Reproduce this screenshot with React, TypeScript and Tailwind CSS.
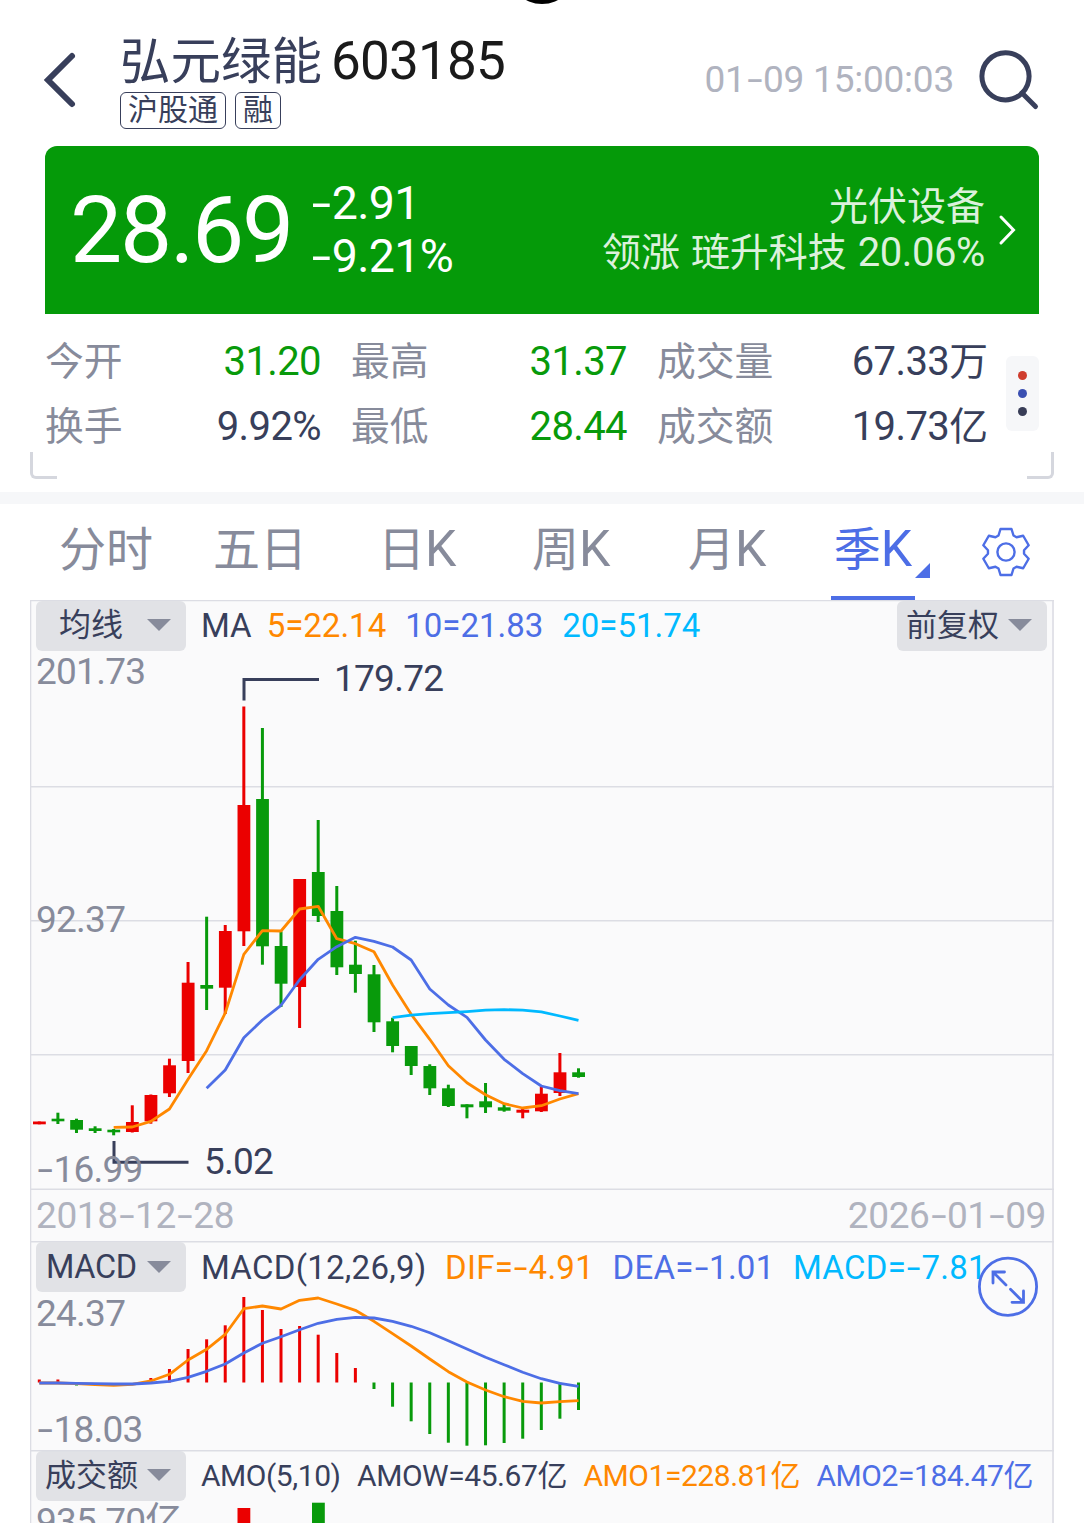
import {Fragment} from "react"
import type {ReactNode} from "react"

interface Candle {
	up: boolean
	top: number
	bottom: number
	high: number
	low: number
}

const UP = "#eb0000"
const DOWN = "#089a0b"
const GRID = "#dcdde4"

const STEP = 18.593
const xAt = (i: number) => 39.3 + STEP * i

// [up, body top, body bottom, wick top, wick bottom]
const rows: [number, number, number, number, number][] = [
	[1, 1121.5, 1124.3, 1121.5, 1124.3],
	[0, 1118.7, 1121.3, 1112.7, 1124],
	[0, 1120, 1129.7, 1118.7, 1133],
	[0, 1128.3, 1131, 1126.3, 1133],
	[0, 1129.7, 1132.3, 1129, 1135.3],
	[1, 1122, 1132, 1105.3, 1132.5],
	[1, 1095, 1121.3, 1094.5, 1123.7],
	[1, 1065.3, 1093.3, 1058.7, 1097],
	[1, 982.7, 1061, 962, 1073],
	[0, 985, 988.7, 916.7, 1010],
	[1, 931, 987.7, 925, 1014],
	[1, 805, 931.3, 706.5, 946],
	[0, 799, 946.3, 728, 964.7],
	[0, 946, 983.7, 931.5, 1007],
	[1, 879, 987, 879, 1028],
	[0, 872, 916, 820, 922],
	[0, 911, 967.3, 886, 975],
	[0, 964.7, 974, 940.7, 992.7],
	[0, 974.3, 1022.3, 965, 1032],
	[0, 1021.3, 1046, 1017.7, 1052.3],
	[0, 1046, 1066, 1046, 1075],
	[0, 1066, 1088.3, 1064.3, 1095],
	[0, 1088.3, 1106, 1084.7, 1107],
	[0, 1104.3, 1107.3, 1104.3, 1118.3],
	[0, 1101.3, 1107.3, 1083, 1113],
	[0, 1107.3, 1110.7, 1104, 1111.7],
	[1, 1109.7, 1112.7, 1109, 1118.3],
	[1, 1093.7, 1111.3, 1086.7, 1112],
	[1, 1072.3, 1093, 1053, 1096],
	[0, 1072.3, 1077, 1068.3, 1077.7],
]
const candles: Candle[] = rows.map(([up, top, bottom, high, low]) => ({up: up === 1, top, bottom, high, low}))

const ma5 = [
	1127.3, 1127, 1121.3, 1109, 1079.3, 1050.7, 1013, 954.3, 930.7, 931, 909, 906.3, 938.7, 943.7, 951.7, 985, 1014.3,
	1039.3, 1065.7, 1082.7, 1094.7, 1103.7, 1108, 1105.7, 1099, 1093.7,
]
const ma10 = [
	1088.3, 1070, 1037.7, 1020, 1005.3, 979.7, 959.3, 946.7, 937.3, 941.3, 947, 960, 989, 1005, 1017.3, 1040, 1059.3,
	1073.7, 1086, 1090.7, 1093.7,
]
const ma20 = [1017.7, 1015.2, 1013.7, 1012.7, 1011.6, 1010.2, 1009.6, 1010.2, 1011.8, 1016, 1020.3]

const ZERO = 1382.5
const macd = [
	1379.5, 1379.5, 1385.5, 1382.5, 1382.5, 1382.5, 1378, 1369, 1349, 1339.3, 1325.3, 1297, 1310, 1329, 1326, 1334.7,
	1353, 1368, 1389, 1406.7, 1421.3, 1434, 1442.7, 1445.7, 1445.3, 1443, 1438.7, 1430, 1418.7, 1410,
]
const dif = [
	1383, 1383, 1383.7, 1384.5, 1385.3, 1384.3, 1381, 1374.3, 1360, 1349.3, 1334.3, 1308.7, 1306, 1309, 1300.3, 1298,
	1304, 1310.3, 1321.3, 1333.7, 1346, 1359, 1371.7, 1382, 1390, 1396.7, 1401.3, 1403, 1401.7, 1400.7,
]
const dea = [
	1383, 1383, 1383.3, 1383.6, 1384, 1384, 1383, 1381.3, 1377.3, 1371.3, 1364, 1353, 1343.3, 1336.7, 1329.7, 1323.3,
	1319.3, 1317.3, 1318, 1321.3, 1326.3, 1332.7, 1340.7, 1349, 1357.3, 1364.7, 1372.3, 1378.7, 1383.3, 1386.3,
]

// Hyphens are stretched so that they take about the width of a digit
function Num({children}: {children: string}) {
	const parts = children.split("-")
	return (
		<>
			{parts.map((part, i) => (
				<Fragment key={i}>
					{i > 0 && <span className="inline-block w-[0.47em] scale-x-150 text-center">-</span>}
					{part}
				</Fragment>
			))}
		</>
	)
}

function Line({data, start, color}: {data: number[]; start: number; color: string}) {
	const points = data.map((y, i) => `${xAt(start + i)},${y}`).join(" ")
	return <polyline points={points} fill="none" stroke={color} strokeWidth={2.8} strokeLinejoin="round" />
}

function GridLine({y}: {y: number}) {
	return <line x1={30} x2={1054} y1={y} y2={y} stroke={GRID} strokeWidth={1.6} />
}

function Caret() {
	return (
		<svg width="24" height="12" viewBox="0 0 24 12" className="shrink-0">
			<path d="M0 0H24L12 12Z" fill="#878b9b" />
		</svg>
	)
}

function Picker({children, className}: {children: ReactNode; className: string}) {
	return (
		<button
			className={`flex h-[50px] w-[150px] shrink-0 items-center justify-between rounded-md bg-[#e1e2e6] leading-none whitespace-nowrap text-[#383f5b] ${className}`}>
			<span>{children}</span>
			<Caret />
		</button>
	)
}

function Gear() {
	const tooth = [
		[-7.5, -16.5],
		[-5.5, -23],
		[5.5, -23],
		[7.5, -16.5],
	]
	const points = [0, 60, 120, 180, 240, 300].flatMap((deg) => {
		const a = (deg * Math.PI) / 180
		return tooth.map(([x, y]) => `${x * Math.cos(a) - y * Math.sin(a)},${x * Math.sin(a) + y * Math.cos(a)}`)
	})
	return (
		<svg width="52" height="52" viewBox="-26 -26 52 52" fill="none" stroke="#4d6ee6" strokeWidth="2.4" strokeLinejoin="round">
			<polygon points={points.join(" ")} />
			<circle r="8.6" />
		</svg>
	)
}

function Header() {
	return (
		<header className="relative flex h-[146px] overflow-hidden">
			<div className="absolute -top-16 left-[508px] size-[68px] rounded-full bg-black"></div>
			<svg width="36" height="60" viewBox="0 0 36 60" className="mt-[50px] ml-[42px]">
				<path d="M30 6L6 30L30 54" fill="none" stroke="#383f5b" strokeWidth="6" strokeLinecap="round" />
			</svg>
			<div className="ml-[42px] pt-[31px]">
				<h1 className="flex h-[61px] items-baseline text-[50.5px] leading-[60px] text-[#383f5b]">
					<span>弘元绿能</span>
					<span className="ml-[9px] text-[53px] tracking-[-0.015em] text-[#1a1a1a]">603185</span>
				</h1>
				<div className="flex gap-[9px] text-[30px] leading-[34px] text-[#383f5b]">
					<span className="flex h-[37px] w-[106px] justify-center rounded-md border border-[#383f5b]">沪股通</span>
					<span className="flex h-[37px] w-[46px] justify-center rounded-md border border-[#383f5b]">融</span>
				</div>
			</div>
			<time className="mt-[59px] ml-auto text-[37px] leading-[41px] tracking-[-0.006em] text-[#b0b3bf]">
				<Num>01-09 15:00:03</Num>
			</time>
			<svg width="64" height="64" viewBox="0 0 64 64" className="mt-[48px] mr-[44px] ml-[22px]" fill="none" stroke="#383f5b" strokeWidth="5">
				<circle cx="29.5" cy="28.3" r="23.6" />
				<path d="M46 45L59.500 58.500" strokeLinecap="round" />
			</svg>
		</header>
	)
}

function PriceCard() {
	return (
		<section className="mx-[45px] flex h-[168px] rounded-t-xl bg-[#059a09] whitespace-nowrap text-white">
			<div className="ml-[25px] pt-[35px] text-[93px] leading-[100px] tracking-[-0.025em]">28.69</div>
			<div className="ml-[18px] pt-[31px] text-[46.5px] leading-[53px] tracking-[-0.015em]">
				<p>
					<Num>-2.91</Num>
				</p>
				<p>
					<Num>-9.21%</Num>
				</p>
			</div>
			<div className="ml-auto pt-[38px] text-right text-[39px] leading-[46px] text-[#dcf1dc]">
				<p>光伏设备</p>
				<p>
					<span className="tracking-[-0.1px] [word-spacing:1.5px]">领涨 琏升科技 </span>
					<span className="text-[40px] tracking-[-0.01em]">20.06%</span>
				</p>
			</div>
			<svg width="20" height="34" viewBox="0 0 20 34" className="mt-[67px] mr-[22px] ml-[12px]">
				<path d="M4 4L16.500 17L4 30" fill="none" stroke="#fff" strokeWidth="3" strokeLinecap="round" />
			</svg>
		</section>
	)
}

const stats = [
	{label: "今开", value: "31.20", color: "text-[#089a0b]"},
	{label: "最高", value: "31.37", color: "text-[#089a0b]"},
	{label: "成交量", value: "67.33", unit: "万", color: "text-[#383f5b]"},
	{label: "换手", value: "9.92%", color: "text-[#383f5b]"},
	{label: "最低", value: "28.44", color: "text-[#089a0b]"},
	{label: "成交额", value: "19.73", unit: "亿", color: "text-[#383f5b]"},
]

function Stats() {
	return (
		<section className="relative flex h-[178px] pl-[45px]">
			<dl className="mt-[15px] grid h-[130px] w-[943px] grid-cols-[276px_276px_331px] grid-rows-2 gap-x-[30px] text-[38.8px] leading-[65px]">
				{stats.map((s) => (
					<div key={s.label} className="flex items-baseline justify-between">
						<dt className="text-[#878b9b]">{s.label}</dt>
						<dd className={s.color}>
							<span className="text-[40px] tracking-[-0.015em]">{s.value}</span>
							{s.unit}
						</dd>
					</div>
				))}
			</dl>
			<div className="mt-[42px] ml-[18px] flex h-[75px] w-[33px] flex-col items-center justify-center gap-[9px] rounded-md bg-[#f6f7f9]">
				<i className="size-[9px] rounded-full bg-[#cf3d2e]"></i>
				<i className="size-[9px] rounded-full bg-[#3b50b2]"></i>
				<i className="size-[9px] rounded-full bg-[#383d57]"></i>
			</div>
			<div className="absolute bottom-[13px] left-[30px] size-[27px] rounded-bl-md border-b-[3px] border-l-[3px] border-[#d5d7de]"></div>
			<div className="absolute right-[30px] bottom-[13px] size-[27px] rounded-br-md border-r-[3px] border-b-[3px] border-[#d5d7de]"></div>
		</section>
	)
}

function Tab({text, className}: {text: string; className: string}) {
	return (
		<button className={`flex h-full items-baseline text-left whitespace-nowrap text-[#878b9b] ${className}`}>
			{text[0]}
			{text[1] === "K" ? <span className="text-[50px]">K</span> : text[1]}
		</button>
	)
}

function Tabs() {
	return (
		<nav className="flex h-24 pl-[59px] text-[47px] leading-[91px]">
			<Tab text="分时" className="w-[154px]" />
			<Tab text="五日" className="w-[165px]" />
			<Tab text="日K" className="w-[154px]" />
			<Tab text="周K" className="w-[156px]" />
			<Tab text="月K" className="w-[143px]" />
			<div className="relative flex h-full w-[84px] items-baseline justify-center border-b-4 border-[#4d6ee6] text-[#4d6ee6]">
				季<span className="text-[50px]">K</span>
				<svg width="15" height="15" viewBox="0 0 15 15" className="absolute top-[59px] left-[84px]">
					<path d="M15 0V15H0Z" fill="#4d6ee6" />
				</svg>
			</div>
			<div className="mt-[22px] ml-[65px] h-[52px]">
				<Gear />
			</div>
		</nav>
	)
}

function KChart() {
	return (
		<div className="relative h-[589px]">
			<svg className="absolute inset-0" width="1024" height="589" viewBox="30 600 1024 589">
				<GridLine y={600.5} />
				<GridLine y={786.7} />
				<GridLine y={920.8} />
				<GridLine y={1054.8} />
				{candles.map((c, i) => (
					<g key={i} fill={c.up ? UP : DOWN}>
						<rect x={xAt(i) - 1.5} y={c.high} width={3} height={c.low - c.high} />
						<rect x={xAt(i) - 6.3} y={c.top} width={12.8} height={c.bottom - c.top} />
					</g>
				))}
				<Line data={ma5} start={4} color="#ff8800" />
				<Line data={ma10} start={9} color="#4d6ee6" />
				<Line data={ma20} start={19} color="#00b9ff" />
				<path d="M244 700.500V679.500H319M114 1141V1162.300H188.500" fill="none" stroke="#383f5b" strokeWidth="3" />
			</svg>
			<div className="relative flex items-start pt-px pl-1.5 text-[33px]">
				<Picker className="pr-[15px] pb-0.5 pl-[23px] text-[32px]">均线</Picker>
				<div className="ml-[15px] flex gap-[19px] leading-[49px] whitespace-nowrap">
					<span className="-mr-1 text-[#383f5b]">MA</span>
					<span className="text-[#ff8800]">5=22.14</span>
					<span className="text-[#4d6ee6]">10=21.83</span>
					<span className="text-[#00b9ff]">20=51.74</span>
				</div>
				<Picker className="mr-[7px] ml-auto pr-[15px] pb-0.5 pl-[9px] text-[31px]">前复权</Picker>
			</div>
			<div className="text-[37px] leading-10 tracking-[-0.02em] text-[#878b9b]">
				<span className="absolute top-[52px] left-1.5">201.73</span>
				<span className="absolute top-[300px] left-1.5">92.37</span>
				<span className="absolute top-[550px] left-1.5">
					<Num>-16.99</Num>
				</span>
				<span className="absolute top-[59px] left-[304px] text-[#383f5b]">179.72</span>
				<span className="absolute top-[542px] left-[174px] text-[#383f5b]">5.02</span>
			</div>
		</div>
	)
}

function MacdChart() {
	return (
		<div className="relative h-[209px]">
			<svg className="absolute inset-0 overflow-visible" width="1024" height="209" viewBox="30 1242 1024 209">
				<GridLine y={1241.8} />
				{macd.map((y, i) => (
					<rect
						key={i}
						x={xAt(i) - 1.5}
						y={Math.min(y, ZERO)}
						width={3}
						height={Math.abs(y - ZERO)}
						fill={y < ZERO ? UP : DOWN}
					/>
				))}
				<Line data={dif} start={0} color="#ff8800" />
				<Line data={dea} start={0} color="#4d6ee6" />
			</svg>
			<div className="relative flex items-start pl-1.5 text-[33px]">
				<Picker className="pr-[15px] pl-[10px] text-[32.5px] tracking-[-0.01em]">MACD</Picker>
				<div className="ml-[15px] flex gap-[18.500px] leading-[51px] tracking-[0.008em] whitespace-nowrap">
					<span className="text-[#383f5b]">MACD(12,26,9)</span>
					<span className="text-[#ff8800]">
						<Num>DIF=-4.91</Num>
					</span>
					<span className="text-[#4d6ee6]">
						<Num>DEA=-1.01</Num>
					</span>
					<span className="text-[#00b9ff]">
						<Num>MACD=-7.81</Num>
					</span>
				</div>
			</div>
			<div className="text-[37px] leading-10 tracking-[-0.02em] text-[#878b9b]">
				<span className="absolute top-[52px] left-1.5">24.37</span>
				<span className="absolute top-[168px] left-1.5">
					<Num>-18.03</Num>
				</span>
			</div>
			<button className="absolute top-[14px] right-[15px]">
				<svg width="62" height="62" viewBox="977 1256 62 62" fill="none" stroke="#4d6ee6" strokeWidth="2.8">
					<circle cx="1008" cy="1286.700" r="28.600" />
					<path
						d="M1004.500 1272H993V1283M993 1272L1006 1285M1012 1302.300H1023.500V1291M1023.500 1302.300L1010.500 1289.300"
						strokeLinecap="round"
					/>
				</svg>
			</button>
		</div>
	)
}

function AmountChart() {
	return (
		<div className="relative h-[72px] overflow-hidden">
			<svg className="absolute inset-0" width="1024" height="72" viewBox="30 1451 1024 72">
				<rect x={237.5} y={1508} width={12.8} height={20} fill={UP} />
				<rect x={312} y={1502.7} width={12.8} height={25} fill={DOWN} />
			</svg>
			<div className="relative flex items-start pl-1.5 text-[30px]">
				<Picker className="pr-[15px] pb-0.5 pl-[9px] text-[31px]">成交额</Picker>
				<div className="ml-[15px] flex gap-[16.500px] leading-[49px] tracking-[-0.015em] whitespace-nowrap">
					<span className="text-[#383f5b]">AMO(5,10)</span>
					<span className="text-[#383f5b]">AMOW=45.67亿</span>
					<span className="text-[#ff8800]">AMO1=228.81亿</span>
					<span className="text-[#4d6ee6]">AMO2=184.47亿</span>
				</div>
			</div>
			<span className="absolute top-[51px] left-1.5 text-[37px] leading-10 tracking-[-0.02em] text-[#878b9b]">935.70亿</span>
		</div>
	)
}

export default function App() {
	return (
		<div className="h-[1523px] w-[1084px] overflow-hidden bg-white font-[Roboto,'Noto_Sans_CJK_SC',sans-serif]">
			<Header />
			<PriceCard />
			<Stats />
			<div className="h-3 bg-[#f6f7f9]"></div>
			<Tabs />
			<main className="relative mx-[30px] bg-[#fafafb]">
				<KChart />
				<div className="relative h-[53px]">
					<svg className="absolute inset-0 overflow-visible" width="1024" height="53" viewBox="30 1189 1024 53">
						<GridLine y={1189.2} />
					</svg>
					<div className="flex justify-between pr-2 pl-1.5 text-[37px] leading-[53px] tracking-[-0.01em] text-[#b0b3bf]">
						<time>
							<Num>2018-12-28</Num>
						</time>
						<time>
							<Num>2026-01-09</Num>
						</time>
					</div>
				</div>
				<MacdChart />
				<AmountChart />
				<svg className="pointer-events-none absolute inset-0" width="1024" height="923" viewBox="30 600 1024 923">
					<path d="M30 1450.700H1054M30.500 600V1523M1053 600V1523" fill="none" stroke={GRID} strokeWidth="1.600" />
				</svg>
			</main>
		</div>
	)
}
